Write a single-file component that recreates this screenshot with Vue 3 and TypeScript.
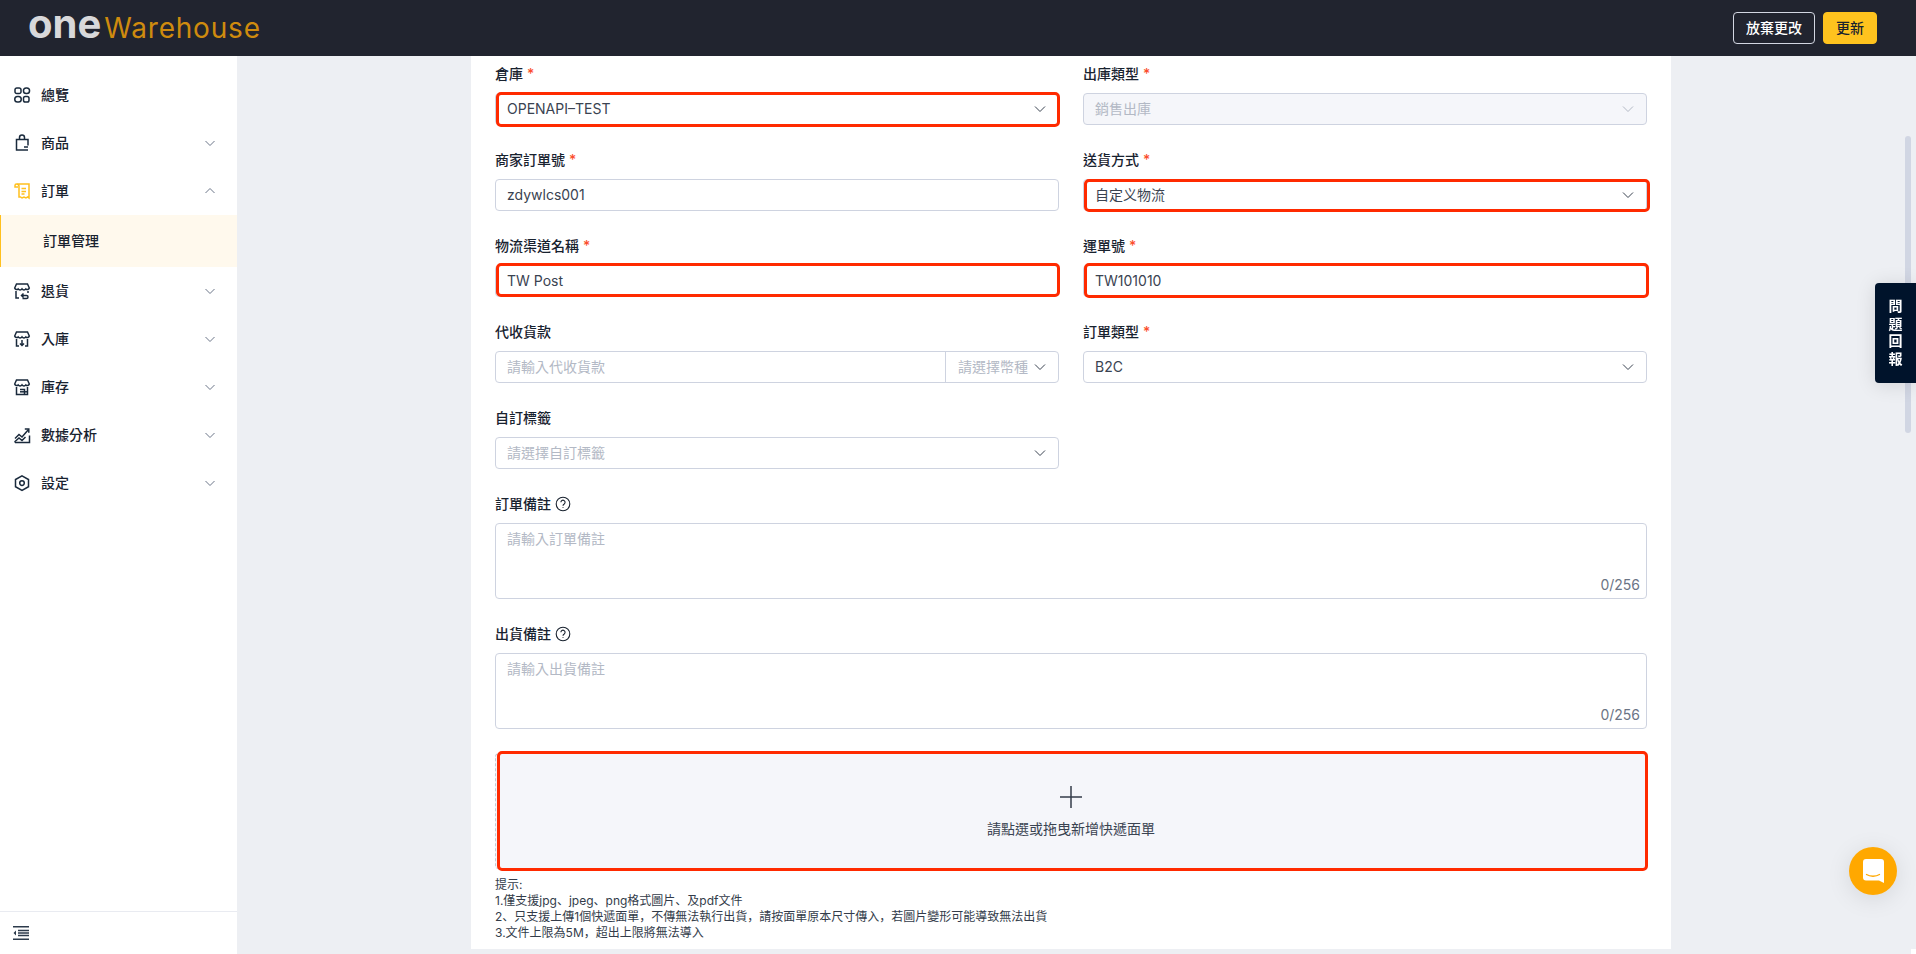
<script setup lang="ts">
interface NavItem {
  label: string
  icon: string[]
  active?: boolean
  open?: boolean
  hasArrow: boolean
  children?: string[]
}

const nav: NavItem[] = [
  {
    label: '總覽',
    hasArrow: false,
    icon: [
      'M3.800 2h2.400A1.800 1.800 0 0 1 8 3.800v1.900a1.800 1.800 0 0 1-1.800 1.800H3.800A1.800 1.800 0 0 1 2 5.700V3.800A1.800 1.800 0 0 1 3.800 2z',
      'M13.200 2h.6a2.750 2.750 0 0 1 0 5.500h-.6a2.750 2.750 0 0 1 0-5.500z',
      'M4.500 10.500h1a2.750 2.750 0 0 1 0 5.500h-1a2.750 2.750 0 0 1 0-5.500z',
      'M12.300 10.500h1.900a1.800 1.800 0 0 1 1.800 1.800v1.900a1.800 1.800 0 0 1-1.800 1.800h-1.900a1.800 1.800 0 0 1-1.800-1.800v-1.900a1.800 1.800 0 0 1 1.800-1.800z',
    ],
  },
  {
    label: '商品',
    hasArrow: true,
    icon: [
      'M3.500 15.500V5.500h11.500v6M15 16H2.800',
      'M6.500 5.500V3.500a2.500 2.500 0 0 1 5 0v2',
      'M11 13h4',
    ],
  },
  {
    label: '訂單',
    hasArrow: true,
    open: true,
    active: true,
    children: ['訂單管理'],
    icon: [
      'M4 2h12v14l-1.500-1-1.500 1-2-1-2 1-1.500-1L6 15V4.500A2.500 2.500 0 0 0 3.500 2 1.500 1.500 0 0 0 2 3.500V5h3',
      'M8.500 6.500h4.500M8.500 9.500h4.500M8.500 12h3',
    ],
  },
  {
    label: '退貨',
    hasArrow: true,
    icon: [
      'M3.500 2h11l1.800 4a2 2 0 0 1-3.400.9 2.300 2.300 0 0 1-3.900 0 2.300 2.300 0 0 1-3.900 0A2 2 0 0 1 1.700 6z',
      'M3 9v7h3M15 9v2',
      'M8.500 13.500h5a1.500 1.500 0 0 1 0 3h-4M10.500 11.500l-2 2 2 2',
    ],
  },
  {
    label: '入庫',
    hasArrow: true,
    icon: [
      'M3.500 2h11l1.800 4a2 2 0 0 1-3.400.9 2.300 2.300 0 0 1-3.900 0 2.300 2.300 0 0 1-3.900 0A2 2 0 0 1 1.700 6z',
      'M3.500 9v7h2.500M14.500 9v7H12',
      'M9 10v5.500M7 13.500l2 2 2-2',
    ],
  },
  {
    label: '庫存',
    hasArrow: true,
    icon: [
      'M3.500 2h11l1.800 4a2 2 0 0 1-3.400.9 2.300 2.300 0 0 1-3.900 0 2.300 2.300 0 0 1-3.900 0A2 2 0 0 1 1.700 6z',
      'M3.500 9v7.500h11V9',
      'M7 11.500h4.500v5',
      'M7 13.800h7.500',
    ],
  },
  {
    label: '數據分析',
    hasArrow: true,
    icon: [
      'M2 16.500h14.500v-7',
      'M2 12.500l4-4 3 2.500 6.500-7.500',
      'M11.800 3h4v3.800',
      'M2 16.500v-1L6 12l3 2.500 3.500-3.500',
    ],
  },
  {
    label: '設定',
    hasArrow: true,
    icon: [
      'M9 1.800l6.500 3.700v7.200L9 16.400l-6.500-3.700V5.500z',
      'M9 6.800a2.300 2.300 0 1 1 0 4.600 2.300 2.300 0 0 1 0-4.600z',
    ],
  },
]

const hints: string[] = [
  '提示:',
  '1.僅支援jpg、jpeg、png格式圖片、及pdf文件',
  '2、只支援上傳1個快遞面單，不傳無法執行出貨，請按面單原本尺寸傳入，若圖片變形可能導致無法出貨',
  '3.文件上限為5M，超出上限將無法導入',
]

const remarks: { label: string; placeholder: string }[] = [
  { label: '訂單備註', placeholder: '請輸入訂單備註' },
  { label: '出貨備註', placeholder: '請輸入出貨備註' },
]
</script>

<template>
  <div class="app">
    <header class="topbar">
      <div class="logo"><span class="logo-one">one</span><span class="logo-wh">Warehouse</span></div>
      <div class="top-actions">
        <button class="btn btn-ghost" type="button">放棄更改</button>
        <button class="btn btn-primary" type="button">更新</button>
      </div>
    </header>

    <div class="body">
      <aside class="sidebar">
        <nav class="nav">
          <template v-for="item in nav" :key="item.label">
            <div class="nav-item">
              <svg class="nav-icon" :class="{ 'nav-icon-active': item.active }" viewBox="0 0 18 18" fill="none">
                <path v-for="(d, i) in item.icon" :key="i" :d="d" />
              </svg>
              <span class="nav-label">{{ item.label }}</span>
              <svg v-if="item.hasArrow" class="nav-arrow" :class="{ 'nav-arrow-up': item.open }" viewBox="0 0 12 12" fill="none">
                <path d="M1.500 4l4.500 4.500L10.500 4" />
              </svg>
            </div>
            <div v-for="child in item.children" :key="child" class="nav-sub">{{ child }}</div>
          </template>
        </nav>
        <div class="side-foot">
          <svg class="collapse" viewBox="0 0 16 14" fill="none">
            <path d="M0 .75h16M0 13.250h16M5 4.500h11M5 7h11M5 9.500h11" />
            <path class="collapse-arrow" d="M3 4.500v5L.5 7z" />
          </svg>
        </div>
      </aside>

      <main class="main">
        <section class="card">
          <div class="form-grid">
            <div class="field">
              <label class="label">倉庫<i class="req">*</i></label>
              <div class="control mark mark-a">
                <span class="value">OPENAPI–TEST</span>
                <svg class="chev" viewBox="0 0 12 12" fill="none"><path d="M1 3.500l5 5 5-5" /></svg>
              </div>
            </div>
            <div class="field">
              <label class="label">出庫類型<i class="req">*</i></label>
              <div class="control disabled">
                <span class="placeholder">銷售出庫</span>
                <svg class="chev chev-light" viewBox="0 0 12 12" fill="none"><path d="M1 3.500l5 5 5-5" /></svg>
              </div>
            </div>

            <div class="field">
              <label class="label">商家訂單號<i class="req">*</i></label>
              <div class="control"><span class="value">zdywlcs001</span></div>
            </div>
            <div class="field">
              <label class="label">送貨方式<i class="req">*</i></label>
              <div class="control mark mark-b">
                <span class="value">自定义物流</span>
                <svg class="chev" viewBox="0 0 12 12" fill="none"><path d="M1 3.500l5 5 5-5" /></svg>
              </div>
            </div>

            <div class="field">
              <label class="label">物流渠道名稱<i class="req">*</i></label>
              <div class="control mark mark-c"><span class="value">TW Post</span></div>
            </div>
            <div class="field">
              <label class="label">運單號<i class="req">*</i></label>
              <div class="control mark mark-d"><span class="value">TW101010</span></div>
            </div>

            <div class="field">
              <label class="label">代收貨款</label>
              <div class="control split">
                <span class="placeholder split-input">請輸入代收貨款</span>
                <span class="split-select">
                  <span class="placeholder">請選擇幣種</span>
                  <svg class="chev" viewBox="0 0 12 12" fill="none"><path d="M1 3.500l5 5 5-5" /></svg>
                </span>
              </div>
            </div>
            <div class="field">
              <label class="label">訂單類型<i class="req">*</i></label>
              <div class="control">
                <span class="value">B2C</span>
                <svg class="chev" viewBox="0 0 12 12" fill="none"><path d="M1 3.500l5 5 5-5" /></svg>
              </div>
            </div>

            <div class="field">
              <label class="label">自訂標籤</label>
              <div class="control">
                <span class="placeholder">請選擇自訂標籤</span>
                <svg class="chev" viewBox="0 0 12 12" fill="none"><path d="M1 3.500l5 5 5-5" /></svg>
              </div>
            </div>
            <div></div>

            <div v-for="r in remarks" :key="r.label" class="field wide">
              <label class="label">
                {{ r.label }}
                <svg class="help" viewBox="0 0 16 16" fill="none">
                  <circle cx="8" cy="8" r="6.800" />
                  <path d="M5.900 6.300a2.100 2.100 0 1 1 3.300 1.700c-.8.500-1.200 1-1.200 1.800" />
                  <path d="M8 11.200v.9" />
                </svg>
              </label>
              <div class="textarea">
                <span class="placeholder">{{ r.placeholder }}</span>
                <span class="counter">0/256</span>
              </div>
            </div>

            <div class="upload wide mark mark-e">
              <svg class="plus" viewBox="0 0 24 24" fill="none"><path d="M12 1v22M1 12h22" /></svg>
              <span class="upload-text">請點選或拖曳新增快遞面單</span>
            </div>
          </div>

          <div class="hints">
            <div v-for="h in hints" :key="h">{{ h }}</div>
          </div>
        </section>
        <div class="scroll-thumb"></div>
        <div class="scroll-corner"></div>
      </main>
    </div>

    <div class="feedback"><span>問</span><span>題</span><span>回</span><span>報</span></div>
    <div class="fab">
      <svg viewBox="0 0 21 24" width="21" height="24">
        <path fill="#fff" d="M3 0h15a3 3 0 0 1 3 3v21l-5-2.500H3a3 3 0 0 1-3-3V3a3 3 0 0 1 3-3z" />
        <path fill="none" stroke="#ffa800" stroke-width="1.300" stroke-linecap="round" d="M3.500 15.500c3.500 2.300 9.500 2.300 13 0" />
      </svg>
    </div>
  </div>
</template>

<style>
html,
body {
  margin: 0;
  height: 100%;
  overflow: hidden;
}
</style>

<style scoped>
.app {
  width: 100%;
  height: 100vh;
  display: flex;
  flex-direction: column;
  overflow: hidden;
  font-family: Inter, "Noto Sans CJK TC", sans-serif;
  font-size: 14px;
  line-height: 22px;
  color: #18222f;
  background: #edeff3;
}

.topbar {
  flex: 0 0 56px;
  display: flex;
  align-items: center;
  justify-content: space-between;
  padding: 0 39px 0 28px;
  background: #21242f;
}
.logo {
  display: flex;
  align-items: baseline;
  gap: 3px;
  height: 56px;
  line-height: 48px;
}
.logo-one {
  font-size: 40px;
  font-weight: 700;
  color: #d8d8da;
}
.logo-wh {
  font-size: 28px;
  font-weight: 400;
  letter-spacing: 0.800px;
  color: #cf8b0e;
}
.top-actions {
  display: flex;
  gap: 8px;
}
.btn {
  height: 32px;
  padding: 0 12px;
  border-radius: 4px;
  font: inherit;
  font-weight: 500;
  cursor: pointer;
}
.btn-ghost {
  width: 82px;
  padding: 0;
  background: transparent;
  border: 1px solid #d3d7e2;
  color: #fff;
}
.btn-primary {
  width: 54px;
  padding: 0;
  border: 1px solid #ffc31e;
  background: #ffc31e;
  color: #18222f;
}

.body {
  flex: 1;
  min-height: 0;
  display: flex;
}
.sidebar {
  flex: 0 0 237px;
  display: flex;
  flex-direction: column;
  background: #fff;
}
.nav {
  flex: 1;
  padding-top: 15px;
}
.nav-item {
  height: 48px;
  display: flex;
  align-items: center;
  padding: 0 17px 0 13px;
}
.nav-icon {
  width: 18px;
  height: 18px;
  margin-right: 10px;
  stroke: #1a2a3c;
  stroke-width: 1.500;
  flex: none;
}
.nav-icon-active {
  stroke: #ffc01e;
}
.nav-label {
  flex: 1;
  font-weight: 500;
}
.nav-arrow {
  width: 12px;
  height: 12px;
  margin-right: 4px;
  stroke: #6c7689;
  stroke-width: 1;
}
.nav-arrow-up {
  transform: rotate(180deg);
}
.nav-sub {
  height: 52px;
  padding-left: 42px;
  display: flex;
  align-items: center;
  font-weight: 500;
  background: #fff9ed;
  border-left: 1px solid #ffc01e;
  box-sizing: border-box;
}
.side-foot {
  height: 43px;
  box-sizing: border-box;
  border-top: 1px solid #e9ebf1;
  display: flex;
  align-items: center;
  padding-left: 13px;
}
.collapse {
  width: 16px;
  height: 14px;
  stroke: #2c3a4b;
  stroke-width: 1.500;
}
.collapse-arrow {
  fill: #2c3a4b;
  stroke: none;
}

.main {
  flex: 1;
  min-width: 0;
  position: relative;
  display: flex;
  justify-content: center;
  padding-right: 11px;
}
.card {
  width: 1200px;
  height: 893px;
  box-sizing: border-box;
  padding: 7px 24px 8px;
  background: #fff;
}
.form-grid {
  display: grid;
  grid-template-columns: 564px 564px;
  column-gap: 24px;
  row-gap: 24px;
}
.wide {
  grid-column: 1 / span 2;
}
.label {
  display: flex;
  align-items: center;
  height: 22px;
  margin-bottom: 8px;
  font-weight: 500;
  color: #18222f;
}
.req {
  font-style: normal;
  color: #fb4d2c;
  margin-left: 4px;
}
.control {
  height: 32px;
  box-sizing: border-box;
  display: flex;
  align-items: center;
  justify-content: space-between;
  padding: 0 11px;
  background: #fff;
  border: 1px solid #ced3e0;
  border-radius: 4px;
}
.mark {
  position: relative;
}
.mark::after {
  content: "";
  position: absolute;
  border: 3px solid #ff2a00;
  border-radius: 5px;
  pointer-events: none;
}
.mark-a::after {
  top: -2px;
  right: -2px;
  bottom: -3px;
  left: 0;
}
.mark-b::after {
  top: -1px;
  right: -4px;
  bottom: -2px;
  left: 0;
}
.mark-c::after {
  top: -3px;
  right: -2px;
  bottom: -1px;
  left: 0;
}
.mark-d::after {
  top: -3px;
  right: -3px;
  bottom: -2px;
  left: 0;
}
.mark-e::after {
  top: -3px;
  right: -2px;
  bottom: -3px;
  left: 1px;
}
.disabled {
  background: #f5f6fa;
}
.value {
  color: #3a4351;
}
.placeholder {
  color: #b3b9c5;
}
.chev {
  width: 12px;
  height: 12px;
  margin-right: 1px;
  stroke: #3a4351;
  stroke-width: 1;
  flex: none;
}
.chev-light {
  stroke: #b3b9c5;
}
.split {
  padding: 0;
}
.split-input {
  flex: 1;
  padding-left: 11px;
}
.split-select {
  width: 113px;
  height: 100%;
  box-sizing: border-box;
  display: flex;
  align-items: center;
  justify-content: space-between;
  padding: 0 11px 0 12px;
  border-left: 1px solid #ced3e0;
}
.help {
  width: 16px;
  height: 16px;
  margin-left: 4px;
  stroke: #18222f;
  stroke-width: 1.100;
}
.textarea {
  position: relative;
  height: 76px;
  box-sizing: border-box;
  padding: 4px 11px;
  border: 1px solid #ced3e0;
  border-radius: 4px;
  display: block;
}
.counter {
  position: absolute;
  right: 6px;
  bottom: 2px;
  color: #6b7485;
}
.upload {
  height: 116px;
  box-sizing: border-box;
  display: flex;
  flex-direction: column;
  align-items: center;
  justify-content: flex-start;
  padding-top: 31px;
  background: #f5f6fa;
  border: 1px dashed #c3c8d4;
  border-radius: 4px;
}
.plus {
  width: 24px;
  height: 24px;
  stroke: #343c4a;
  stroke-width: 1.500;
}
.upload-text {
  margin-top: 9px;
  color: #3a4351;
}
.hints {
  margin-top: 8px;
  font-family: Inter, "Noto Sans CJK SC", sans-serif;
  font-size: 12px;
  line-height: 16px;
  color: #333c4a;
}
.scroll-thumb {
  position: absolute;
  top: 80px;
  right: 5px;
  width: 6px;
  height: 297px;
  border-radius: 3px;
  background: #d1d6e3;
}
.scroll-corner {
  position: absolute;
  right: 0;
  bottom: 0;
  width: 5px;
  height: 5px;
  background: #fff;
}
.feedback {
  position: fixed;
  top: 283px;
  right: 0;
  width: 41px;
  height: 100px;
  box-sizing: border-box;
  padding-top: 14px;
  display: flex;
  flex-direction: column;
  align-items: center;
  font-size: 14px;
  line-height: 17.500px;
  font-weight: 600;
  color: #fff;
  background: #00132b;
  border-radius: 4px 0 0 4px;
  box-shadow: 0 2px 20px rgba(0, 0, 0, 0.12);
}
.fab {
  position: fixed;
  left: 1849px;
  top: 847px;
  width: 48px;
  height: 48px;
  border-radius: 50%;
  background: #ffa800;
  display: flex;
  align-items: center;
  justify-content: center;
  box-shadow: 0 4px 24px rgba(0, 0, 0, 0.1);
}
</style>
